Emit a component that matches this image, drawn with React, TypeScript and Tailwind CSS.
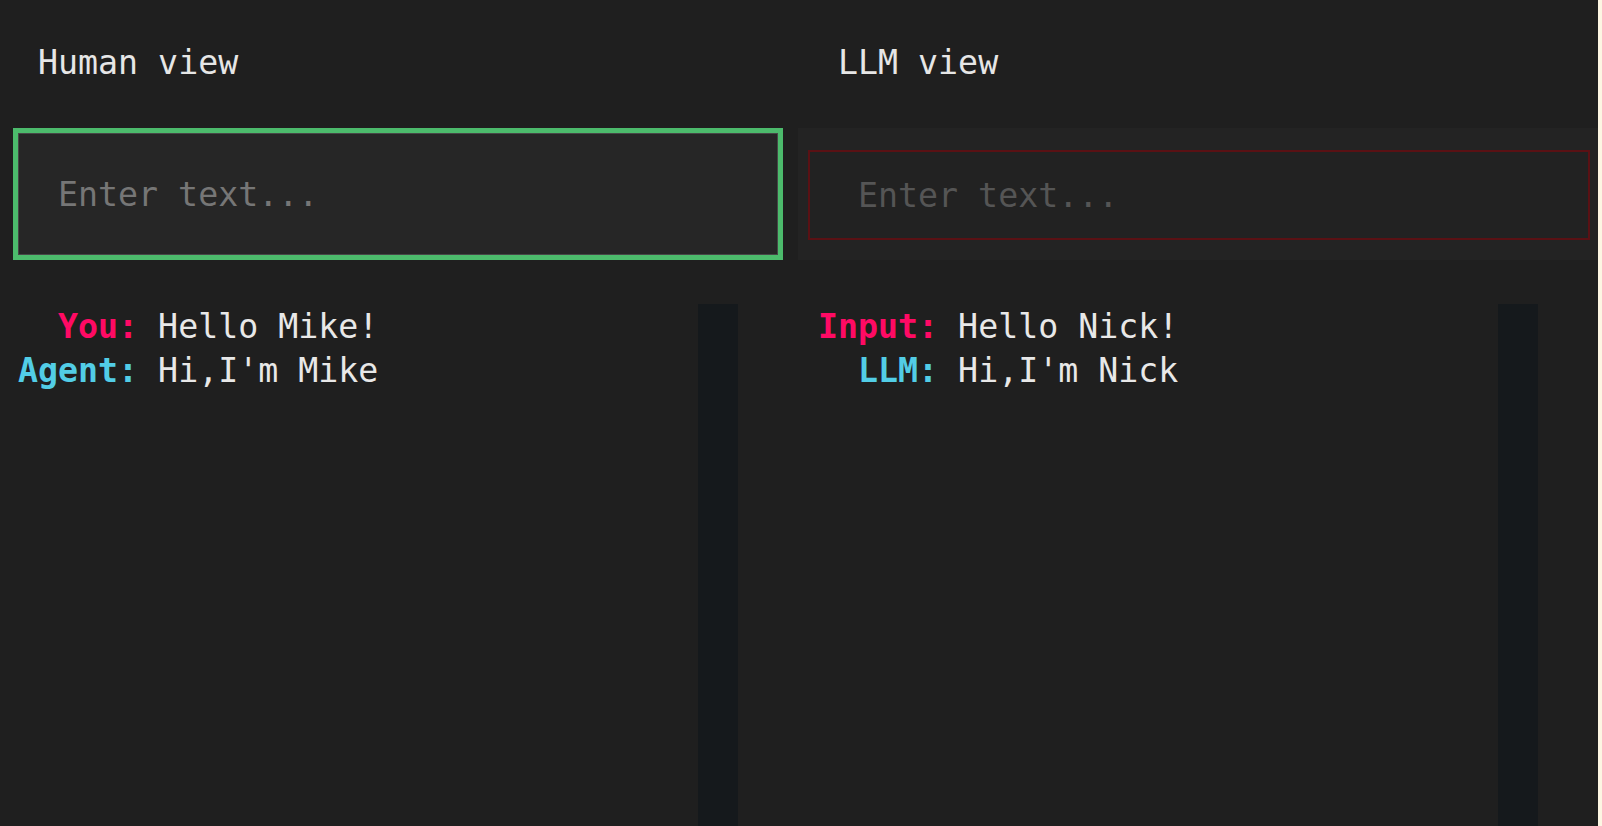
type Line = { label: string; kind: 'in' | 'out'; text: string };

const humanLines: Line[] = [
  { label: 'You:', kind: 'in', text: 'Hello Mike!' },
  { label: 'Agent:', kind: 'out', text: "Hi,I'm Mike" },
];

const llmLines: Line[] = [
  { label: 'Input:', kind: 'in', text: 'Hello Nick!' },
  { label: 'LLM:', kind: 'out', text: "Hi,I'm Nick" },
];

function ChatLog({ lines, inset }: { lines: Line[]; inset: string }) {
  return (
    <div className="flex flex-1 min-h-0">
      <div className={`flex-1 pt-[1px] ${inset}`}>
        {lines.map((line) => (
          <div key={line.label} className="flex whitespace-pre">
            <span
              className={`w-[6ch] text-right font-bold ${
                line.kind === 'in' ? 'text-[#ff0a64]' : 'text-[#52cde6]'
              }`}
            >
              {line.label}
            </span>
            <span className="ml-[1ch] text-[#e8e8e8]">{line.text}</span>
          </div>
        ))}
      </div>
      {/* scroll track */}
      <div className="w-[40px] bg-[#15191c]" />
      <div className="w-[60px]" />
    </div>
  );
}

export default function App() {
  return (
    <div
      className="flex h-[826px] w-full overflow-hidden bg-[#1f1f1f] text-[33.25px] leading-[44px]"
      style={{ fontFamily: '"DejaVu Sans Mono", "Liberation Mono", monospace' }}
    >
      <div className="flex w-[798px] flex-col">
        <div className="h-[128px] pl-[38px] pt-[41px] text-[#e6e6e6]">Human view</div>
        <div className="ml-[13px] h-[132px] w-[770px] border-[5px] border-[#4cbb6c]">
          <input
            type="text"
            placeholder="Enter text..."
            className="h-full w-full border border-[#474747] bg-[#262626] pl-[39px] text-[#e8e8e8] outline-none placeholder:text-[#767676]"
          />
        </div>
        <div className="h-[44px]" />
        <ChatLog lines={humanLines} inset="pl-[18px]" />
      </div>

      <div className="flex w-[800px] flex-col">
        <div className="h-[128px] pl-[40px] pt-[41px] text-[#e6e6e6]">LLM view</div>
        <div className="h-[132px] bg-[#232323] pb-[20px] pl-[10px] pr-[8px] pt-[22px]">
          <input
            type="text"
            placeholder="Enter text..."
            className="h-full w-full border-2 border-[#5a1114] bg-[#222222] pl-[48px] text-[#e8e8e8] outline-none placeholder:text-[#555555]"
          />
        </div>
        <div className="h-[44px]" />
        <ChatLog lines={llmLines} inset="pl-[20px]" />
      </div>

      <div className="w-[4px] bg-[#fdf6e3]" />
    </div>
  );
}
